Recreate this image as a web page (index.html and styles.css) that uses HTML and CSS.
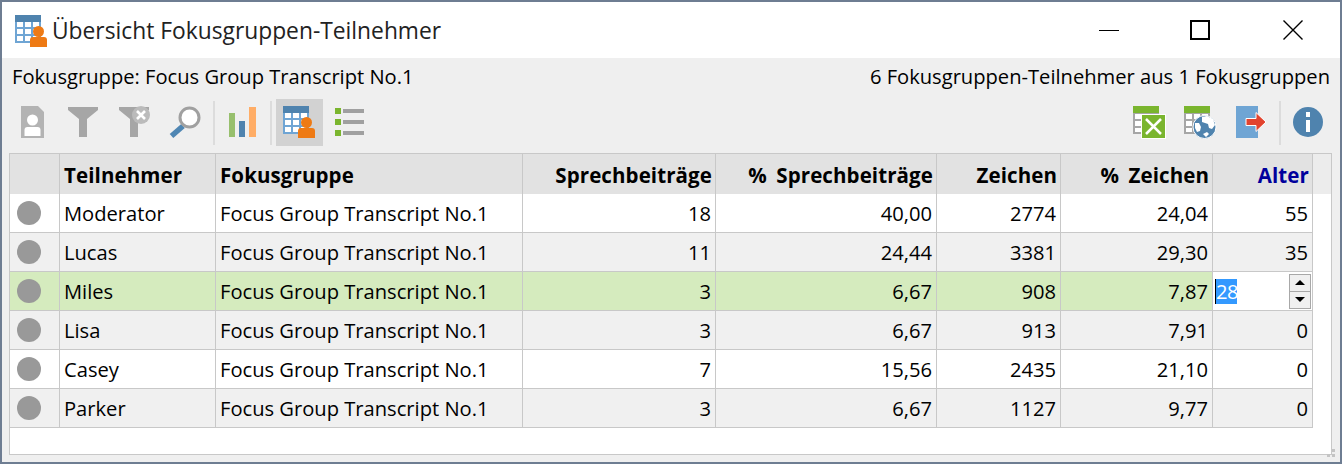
FILE: index.html
```html
<!DOCTYPE html>
<html lang="de">
<head>
<meta charset="utf-8">
<title>Übersicht Fokusgruppen-Teilnehmer</title>
<link rel="stylesheet" href="styles.css">
</head>
<body>
<div class="window">
  <header class="titlebar">
    <svg class="title-icon" viewBox="7 7 32 32" width="32" height="32">
      <rect x="7" y="7" width="26" height="28" fill="#6fa5d4"/><rect x="7" y="7" width="26" height="7" fill="#4f83ae"/>
      <path fill="#fff" d="M9 14h6v5H9zM17 14h6v5h-6zM25 14h6v5h-6zM9 21h6v5H9zM17 21h6v5h-6zM25 21h6v5h-6zM9 28h6v5H9zM17 28h6v5h-6zM25 28h6v5h-6z"/>
      <circle cx="30.5" cy="23.5" r="5.5" fill="#ee7a14"/><path d="M22 39v-7q0-3 3-3h11q3 0 3 3v7z" fill="#ee7a14"/>
    </svg>
    <span class="title-text">Übersicht Fokusgruppen-Teilnehmer</span>
    <div class="win-controls">
      <svg width="20" height="20" viewBox="0 0 20 20"><path d="M0 10.5h20" stroke="#000" fill="none"/></svg>
      <svg width="20" height="20" viewBox="0 0 20 20"><rect x="1" y="1" width="18" height="18" fill="none" stroke="#000" stroke-width="2"/></svg>
      <svg class="close" width="20" height="20" viewBox="0 0 20 20"><path d="M.5.5l19 19M19.5.5l-19 19" stroke="#000" stroke-width="1.4" fill="none"/></svg>
    </div>
  </header>
  <main class="content">
    <div class="infoline"><span>Fokusgruppe: Focus Group Transcript No.1</span><span>6 Fokusgruppen-Teilnehmer aus 1 Fokusgruppen</span></div>
    <div class="toolbar">
      <button class="tool"><svg viewBox="0 0 47 47"><path d="M12 7h17l6 6v26H12z" fill="#b3b3b3"/><circle cx="23.5" cy="21" r="5.5" fill="#fff"/><path d="M15.500 37v-6q0-3 3-3h10q3 0 3 3v6z" fill="#fff"/></svg></button>
      <button class="tool"><svg viewBox="0 0 47 47"><path d="M8 8h30v3L27 20v18h-8V20L8 11z" fill="#a6a6a6"/></svg></button>
      <button class="tool"><svg viewBox="0 0 47 47"><path d="M8 8h30v3L27 20v18h-8V20L8 11z" fill="#a6a6a6"/><circle cx="30" cy="16" r="9" fill="#bbb"/><path d="M26 12l8 8M34 12l-8 8" stroke="#fff" stroke-width="2.600"/></svg></button>
      <button class="tool"><svg viewBox="0 0 47 47"><path d="M21 27L9.500 37" stroke="#4f86b3" stroke-width="5.500"/><circle cx="27.500" cy="18.500" r="9.500" fill="#fff" stroke="#a0a0a0" stroke-width="3"/></svg></button>
      <i class="sep"></i>
      <button class="tool"><svg viewBox="0 0 47 47"><rect x="10" y="14" width="6" height="24" fill="#97bf6d"/><rect x="20" y="22" width="6" height="16" fill="#4f83ae"/><rect x="30" y="8" width="7" height="30" fill="#ffad66"/></svg></button>
      <i class="sep"></i>
      <button class="tool active"><svg viewBox="0 0 47 47">
        <rect x="7" y="7" width="26" height="28" fill="#6fa5d4"/><rect x="7" y="7" width="26" height="7" fill="#4f83ae"/>
        <path fill="#fff" d="M9 14h6v5H9zM17 14h6v5h-6zM25 14h6v5h-6zM9 21h6v5H9zM17 21h6v5h-6zM25 21h6v5h-6zM9 28h6v5H9zM17 28h6v5h-6zM25 28h6v5h-6z"/>
        <circle cx="30.500" cy="23.500" r="5.500" fill="#ee7a14"/><path d="M22 39v-7q0-3 3-3h11q3 0 3 3v7z" fill="#ee7a14"/></svg></button>
      <button class="tool"><svg viewBox="0 0 47 47"><path fill="#7ab52e" d="M8 9h6v6H8zM8 20h6v6H8zM8 31h6v6H8z"/><path fill="#a0a0a0" d="M16 10h21v4H16zM16 21h21v4H16zM16 32h21v4H16z"/></svg></button>
      <span class="spacer"></span>
      <button class="tool"><svg viewBox="0 0 47 47"><rect x="7" y="7" width="26" height="28" fill="#a6a6a6"/><rect x="7" y="7" width="26" height="7" fill="#7ab52e"/>
        <path fill="#fff" d="M9 15h6v5H9zM17 15h6v5h-6zM25 15h6v5h-6zM9 22h6v5H9zM9 29h6v4H9z"/>
        <rect x="15.500" y="15.500" width="24" height="24" fill="#7ab52e" stroke="#fff"/><path d="M20 20l15 15M35 20L20 35" stroke="#fff" stroke-width="2.500"/></svg></button>
      <button class="tool"><svg viewBox="0 0 47 47"><rect x="7" y="7" width="26" height="28" fill="#a6a6a6"/><rect x="7" y="7" width="26" height="7" fill="#7ab52e"/>
        <path fill="#fff" d="M9 15h6v5H9zM17 15h6v5h-6zM25 15h6v5h-6zM9 22h6v5H9zM9 29h6v4H9z"/>
        <circle cx="27.500" cy="28" r="11.500" fill="#4f83ae" stroke="#fff"/><path fill="#fff" d="M25 18l5-1 6 3 2 6-3 4-3-1-1-4-6-2zM18 24l4 0 2 4-1 4-3 1-2-4zM26 35l4-2 2 2-3 3z"/></svg></button>
      <button class="tool"><svg viewBox="0 0 47 47"><rect x="8" y="7" width="22" height="32" fill="#6fa5d4"/><path d="M18 19.500h10v-6l10 9.500-10 9.500v-6H18z" fill="#e2432e" stroke="#fff"/></svg></button>
      <i class="sep"></i>
      <button class="tool"><svg viewBox="0 0 47 47"><circle cx="23" cy="23" r="15" fill="#4f83ae"/><path fill="#fff" d="M21 13h4v5h-4zM21 21h4v12h-4z"/></svg></button>
    </div>
    <div class="grid-wrap">
      <table class="grid">
        <colgroup><col class="c0"><col class="c1"><col class="c2"><col class="c3"><col class="c4"><col class="c5"><col class="c6"><col class="c7"><col></colgroup>
        <thead><tr><th></th><th>Teilnehmer</th><th>Fokusgruppe</th><th class="num">Sprechbeiträge</th><th class="num">% Sprechbeiträge</th><th class="num">Zeichen</th><th class="num">% Zeichen</th><th class="num user">Alter</th><th class="filler"></th></tr></thead>
        <tbody>
          <tr><td><i class="dot"></i></td><td>Moderator</td><td>Focus Group Transcript No.1</td><td class="num">18</td><td class="num">40,00</td><td class="num">2774</td><td class="num">24,04</td><td class="num">55</td></tr>
          <tr class="alt"><td><i class="dot"></i></td><td>Lucas</td><td>Focus Group Transcript No.1</td><td class="num">11</td><td class="num">24,44</td><td class="num">3381</td><td class="num">29,30</td><td class="num">35</td></tr>
          <tr class="sel"><td><i class="dot"></i></td><td>Miles</td><td>Focus Group Transcript No.1</td><td class="num">3</td><td class="num">6,67</td><td class="num">908</td><td class="num">7,87</td>
            <td class="edit"><div class="editor"><span class="selected">28</span><span class="spin"><b><i class="up"></i></b><b><i class="down"></i></b></span></div></td></tr>
          <tr class="alt"><td><i class="dot"></i></td><td>Lisa</td><td>Focus Group Transcript No.1</td><td class="num">3</td><td class="num">6,67</td><td class="num">913</td><td class="num">7,91</td><td class="num">0</td></tr>
          <tr><td><i class="dot"></i></td><td>Casey</td><td>Focus Group Transcript No.1</td><td class="num">7</td><td class="num">15,56</td><td class="num">2435</td><td class="num">21,10</td><td class="num">0</td></tr>
          <tr class="alt"><td><i class="dot"></i></td><td>Parker</td><td>Focus Group Transcript No.1</td><td class="num">3</td><td class="num">6,67</td><td class="num">1127</td><td class="num">9,77</td><td class="num">0</td></tr>
        </tbody>
      </table>
    </div>
    <svg class="grip" width="8" height="8" viewBox="0 0 8 8"><path fill="#c4c4c4" d="M5 0h3v3H5zM0 5h3v3H0zM5 5h3v3H5z"/></svg>
  </main>
</div>
</body>
</html>
```
FILE: styles.css
```css
* { box-sizing: border-box; }
html, body { margin: 0; height: 100%; }
body { font-family: "Open Sans", "Noto Sans", sans-serif; color: #000; overflow: hidden; }
.window { width: 1342px; height: 464px; border: 2px solid #6e7d92; display: flex; flex-direction: column; background: #efefef; }
.titlebar { height: 56px; background: #fff; display: flex; align-items: center; padding-left: 13px; flex: none; }
.title-icon { margin-top: 2px; margin-right: 5px; flex: none; }
.title-text { font-size: 22.8px; color: #222; }
.win-controls { margin-left: auto; display: flex; gap: 71px; padding-right: 37px; margin-top: -1px; }
.win-controls svg { display: block; }
.win-controls .close { margin-left: 2px; }
.content { flex: 1; position: relative; display: flex; flex-direction: column; padding: 0 8px 0 7px; min-height: 0; }
.infoline { height: 36px; display: flex; justify-content: space-between; align-items: center; font-size: 20.15px; padding: 0 2px 0 3px; flex: none; }
.toolbar { height: 47px; margin-top: 5px; display: flex; gap: 4px; flex: none; }
.tool { width: 47px; height: 47px; padding: 0; border: 0; background: none; display: block; flex: none; }
.tool svg { display: block; width: 47px; height: 47px; }
.tool.active { background: #d2d2d2; }
.sep { width: 2px; height: 44px; margin-top: 2px; background: #dcdcdc; flex: none; }
.spacer { flex: 1; }
.grid-wrap { height: 302px; margin-top: 7px; border: 1px solid #c8c8c8; background: #fff; flex: none; }
.grid { border-collapse: separate; border-spacing: 0; table-layout: fixed; width: 100%; font-size: 20.15px; }
.c0 { width: 50px; } .c1 { width: 156px; } .c2 { width: 307px; } .c3 { width: 193px; }
.c4 { width: 221px; } .c5 { width: 124px; } .c6 { width: 152px; } .c7 { width: 100px; }
th { height: 40px; background: #e2e2e2; font-weight: 700; text-align: left; padding: 1px 3px 0 4px; border-right: 1px solid #c8c8c8; font-size: 20.5px; letter-spacing: 0.1px; word-spacing: 4px; white-space: nowrap; }
td { height: 39px; padding: 0 3px 0 4px; border-right: 1px solid #c8c8c8; border-bottom: 1px solid #c8c8c8; white-space: nowrap; background: #fff; }
th.num { text-align: right; }
td.num { text-align: right; padding-right: 4px; }
th.user { color: #00009c; }
th.filler { background: #ececec; border-right: 0; }
.alt td { background: #f0f0f0; }
.sel td { background: #d5ebbe; }
.dot { display: block; width: 24px; height: 24px; border-radius: 50%; background: #999; margin: -1px 0 0 3px; }
.sel td.edit { background: #fff; padding: 0; }
.editor { display: flex; align-items: center; height: 38px; padding-left: 2px; }
.selected { background: #3399ff; color: #fff; height: 25px; line-height: 25px; width: 22px; border-left: 1px solid #000; margin-top: 1px; letter-spacing: -0.5px; }
.spin { margin-left: auto; margin-right: 1px; width: 22px; height: 35px; border: 1px solid #a8a8a8; background: #f0f0f0; display: flex; flex-direction: column; }
.spin b { flex: 1; display: flex; align-items: center; justify-content: center; }
.spin b + b { border-top: 1px solid #a8a8a8; }
.up { width: 0; height: 0; border: 5px solid transparent; border-top: 0; border-bottom: 5px solid #000; }
.down { width: 0; height: 0; border: 5px solid transparent; border-bottom: 0; border-top: 5px solid #000; }
.grip { position: absolute; right: 5px; bottom: 5px; }
```
